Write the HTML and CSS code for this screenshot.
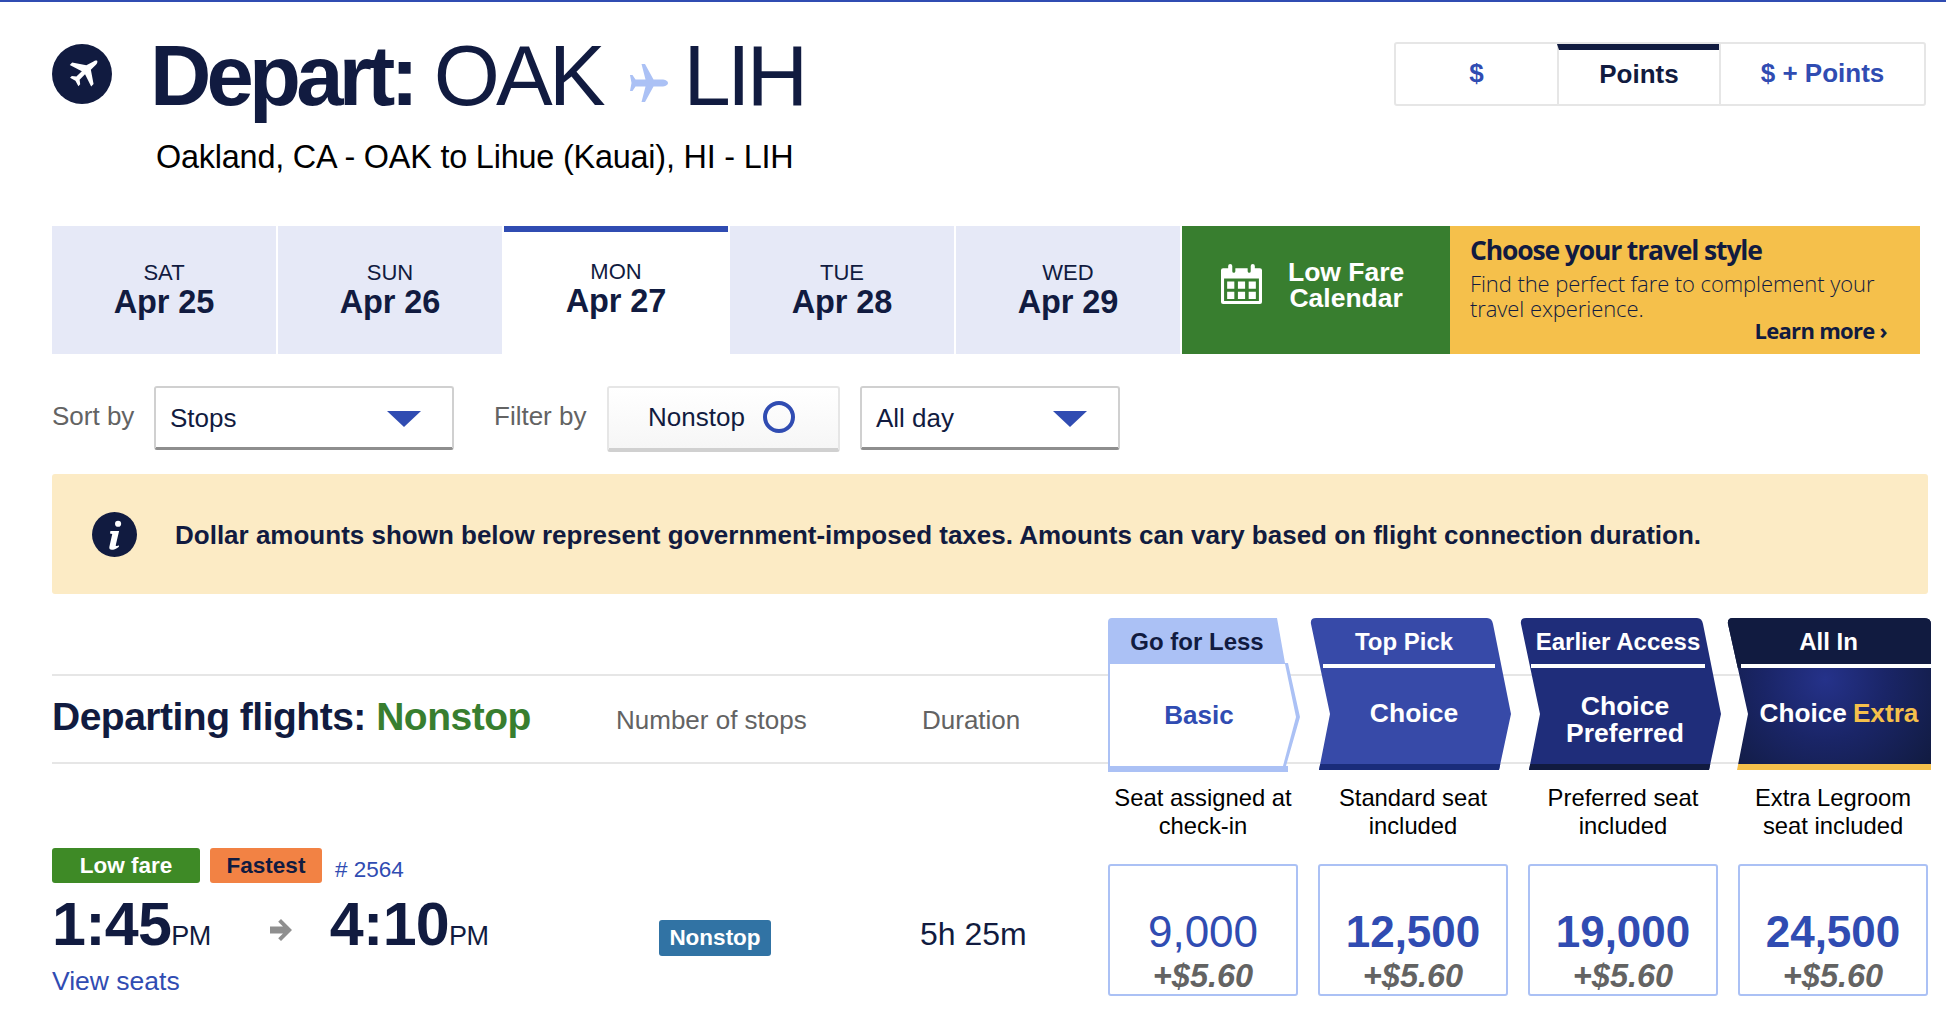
FILE: index.html
```html
<!DOCTYPE html>
<html lang="en">
<head>
<meta charset="utf-8">
<title>Depart: OAK to LIH</title>
<link rel="stylesheet" href="styles.css">
</head>
<body>
<main class="page">
  <header class="top">
    <div class="route">
      <svg class="depart-icon" viewBox="0 0 60 60"><circle cx="30" cy="30" r="30" fill="#111b40"/><path transform="translate(30 30) scale(.82) translate(-30 -30)" fill="#fff" d="M43.500 15.200c1.700-1.700 4.300-2.200 5-1.500s.2 3.300-1.500 5l-6.200 6.200 3.300 17.300-2.900 2.900-7.500-14.700-6.600 6.600.7 5.600-2.200 2.200-3.600-6.600-6.600-3.600 2.200-2.200 5.600.7 6.600-6.600-14.700-7.500 2.900-2.900 17.300 3.300z"/></svg>
      <div class="route-text">
        <h1 class="route-title"><b>Depart:</b> OAK <svg class="route-plane" viewBox="0 0 38 38"><path fill="#abc1f5" d="M38 19c0-2-3-3.500-6-3.500h-8.500L15 0h-3.500l4 15.500H5.500L2.500 11H0l1.500 8L0 27h2.500l3-4.500h10L11.500 38H15l8.500-15.500H32c3 0 6-1.500 6-3.500z"/></svg> LIH</h1>
        <p class="route-sub">Oakland, CA - OAK to Lihue (Kauai), HI - LIH</p>
      </div>
    </div>
    <div class="toggle">
      <div class="toggle-item">$</div>
      <div class="toggle-item toggle-active">Points</div>
      <div class="toggle-item">$ + Points</div>
    </div>
  </header>

  <section class="dates">
    <div class="date"><span class="date-day">SAT</span><span class="date-val">Apr 25</span></div>
    <div class="date"><span class="date-day">SUN</span><span class="date-val">Apr 26</span></div>
    <div class="date date-active"><span class="date-day">MON</span><span class="date-val">Apr 27</span></div>
    <div class="date"><span class="date-day">TUE</span><span class="date-val">Apr 28</span></div>
    <div class="date"><span class="date-day">WED</span><span class="date-val">Apr 29</span></div>
    <div class="calendar">
      <svg class="calendar-icon" viewBox="0 0 40 40"><path fill="#fff" d="M2 5h5V3a2 2 0 0 1 4 0v5a1.500 1.500 0 0 0 3 0V5h12v3a1.500 1.500 0 0 0 3 0V3a2 2 0 0 1 4 0v2h5a2 2 0 0 1 2 2v31a2 2 0 0 1-2 2H2a2 2 0 0 1-2-2V7a2 2 0 0 1 2-2zm1 10v22h34V15z"/><path fill="#fff" d="M6 18h7v7H6zm10.500 0h7v7h-7zM27 18h7v7h-7zM6 28h7v7H6zm10.500 0h7v7h-7zM27 28h7v7h-7z"/></svg>
      <div class="calendar-text"><span class="calendar-line">Low Fare</span><span class="calendar-line">Calendar</span></div>
    </div>
    <div class="promo">
      <div class="promo-title">Choose your travel style</div>
      <div class="promo-body">Find the perfect fare to complement your</div>
      <div class="promo-body">travel experience.</div>
      <div class="promo-link">Learn more ›</div>
    </div>
  </section>

  <section class="controls">
    <span class="control-label">Sort by</span>
    <div class="select select-sort"><span>Stops</span><i class="caret"></i></div>
    <span class="control-label control-label-filter">Filter by</span>
    <div class="chip"><span>Nonstop</span><i class="ring"></i></div>
    <div class="select select-time"><span>All day</span><i class="caret"></i></div>
  </section>

  <section class="notice">
    <svg class="notice-icon" viewBox="0 0 44 44"><circle cx="22" cy="22" r="22" fill="#111b40"/><circle cx="25.500" cy="11.500" r="3" fill="#fff"/><path fill="#fff" d="M18 18.500h8.500l-3.300 14c-.2 1 .6 1.200 2.800 0l.4 1.500c-3 2.200-5.400 3-7 3-2 0-2.800-1.200-2.400-3l2.800-12.500-2.200-.4z"/></svg>
    <p class="notice-text">Dollar amounts shown below represent government-imposed taxes. Amounts can vary based on flight connection duration.</p>
  </section>

  <section class="fares-head">
    <div class="heads">
      <h2 class="heads-title">Departing flights: <em>Nonstop</em></h2>
      <span class="heads-col heads-stops">Number of stops</span>
      <span class="heads-col heads-duration">Duration</span>
    </div>
    <div class="tile tile-basic">
      <div class="tile-tag">Go for Less</div>
      <div class="tile-inner">Basic</div>
    </div>
    <div class="tile tile-choice">
      <div class="tile-tag">Top Pick</div>
      <div class="tile-name">Choice</div>
    </div>
    <div class="tile tile-preferred">
      <div class="tile-tag">Earlier Access</div>
      <div class="tile-name">Choice<br>Preferred</div>
    </div>
    <div class="tile tile-extra">
      <div class="tile-tag">All In</div>
      <div class="tile-name">Choice <strong>Extra</strong></div>
    </div>
  </section>

  <section class="flight">
    <div class="captions">
      <div class="caption">Seat assigned at<br>check-in</div>
      <div class="caption">Standard seat<br>included</div>
      <div class="caption">Preferred seat<br>included</div>
      <div class="caption">Extra Legroom<br>seat included</div>
    </div>
    <div class="flight-info">
      <div class="tags">
        <span class="tag tag-low">Low fare</span>
        <span class="tag tag-fast">Fastest</span>
        <span class="flight-no"># 2564</span>
      </div>
      <div class="times">
        <span class="time">1:45<small>PM</small></span>
        <svg class="time-arrow" viewBox="0 0 22 22"><path fill="#8f8f8f" d="M11 0l11 11-11 11-2.800-2.800L13 14.500H0v-7h13L8.200 2.800z"/></svg>
        <span class="time">4:10<small>PM</small></span>
      </div>
      <a class="seats">View seats</a>
    </div>
    <div class="stops"><span class="stops-badge">Nonstop</span></div>
    <div class="duration">5h 25m</div>
    <div class="prices">
      <div class="price"><span class="points points-light">9,000</span><span class="tax">+$5.60</span></div>
      <div class="price"><span class="points">12,500</span><span class="tax">+$5.60</span></div>
      <div class="price"><span class="points">19,000</span><span class="tax">+$5.60</span></div>
      <div class="price"><span class="points">24,500</span><span class="tax">+$5.60</span></div>
    </div>
  </section>
</main>
</body>
</html>
```

FILE: styles.css
```css
* { box-sizing: border-box; }
html, body { margin: 0; height: 100%; overflow: hidden; background: #fff; }
body {
  border-top: 2px solid #304cb2;
  font-family: "Liberation Sans", Arial, sans-serif;
  color: #111b40;
}
.page { padding-left: 52px; width: 1946px; }

/* header */
.top { display: flex; height: 224px; }
.route { display: flex; width: 1342px; padding-top: 42px; }
.depart-icon { width: 60px; height: 60px; flex: none; }
.route-text { margin-left: 38px; }
.route-title {
  margin: 0;
  font-size: 85px;
  line-height: 62px;
  font-weight: 400;
  letter-spacing: -3.800px;
  white-space: nowrap;
  padding-top: 1px;
}
.route-title b { font-weight: 700; letter-spacing: -4.800px; }
.route-plane { width: 38px; height: 38px; margin: 0 -4px 0 8px; vertical-align: 3px; }
.route-sub { margin: 32px 0 0 6px; font-size: 32.400px; line-height: 36px; color: #000; letter-spacing: -.2px; }

.toggle {
  display: flex;
  width: 532px;
  height: 64px;
  margin-top: 40px;
  border: 2px solid #e6e6e6;
  border-radius: 3px;
}
.toggle-item {
  flex: 1;
  display: flex;
  align-items: center;
  justify-content: center;
  font-size: 26px;
  font-weight: 700;
  color: #304cb2;
  border-left: 2px solid #e6e6e6;
  padding-bottom: 1px;
}
.toggle-item:first-child { flex: none; width: 161px; border-left: 0; }
.toggle-item:last-child { flex: none; width: 207px; padding-right: 2px; }
.toggle-active { color: #111b40; flex: none; width: 162px; border-top: 6px solid #111b40; padding-bottom: 5px; }

/* dates */
.dates { display: flex; height: 128px; }
.date {
  width: 224px;
  margin-right: 2px;
  background: #e6e9f7;
  display: flex;
  flex-direction: column;
  align-items: center;
  padding-top: 34px;
}
.date-day { font-size: 22px; line-height: 25px; }
.date-val { font-size: 32.500px; line-height: 35px; font-weight: 700; letter-spacing: -.1px; }
.date-active { background: #fff; border-top: 6px solid #304cb2; padding-top: 27px; }
.calendar {
  width: 268px;
  background: #387e2f;
  color: #fff;
  display: flex;
  align-items: center;
  padding: 0 0 8px 39px;
}
.calendar-icon { width: 41px; height: 41px; flex: none; margin-top: -5px; }
.calendar-text { margin-left: 26px; font-size: 26.500px; font-weight: 700; text-align: center; margin-top: -3px; }
.calendar-line { display: block; height: 26px; line-height: 26px; }
.promo {
  width: 470px;
  background: #f5c04b;
  padding: 6px 32px 0 20px;
  font-family: "Open Sans", sans-serif;
}
.promo-title { font-size: 26.500px; line-height: 36px; font-weight: 700; letter-spacing: -1.150px; margin-bottom: 3px; }
.promo-body { width: fit-content; font-size: 22px; line-height: 25px; letter-spacing: -.08px; font-weight: 300; }
.promo-link { text-align: right; font-size: 22px; line-height: 26px; font-weight: 700; letter-spacing: -.7px; margin: -4px 1px 0 0; }

/* controls */
.controls { display: flex; align-items: flex-start; margin-top: 32px; height: 66px; }
.control-label { font-size: 26px; line-height: 60px; color: #636363; width: 102px; }
.control-label-filter { margin-left: 40px; width: 113px; }
.select {
  height: 64px;
  display: flex;
  align-items: center;
  justify-content: space-between;
  padding: 2px 31px 0 14px;
  border: 2px solid #d0d0d0;
  border-bottom: 3px solid #8e8e8e;
  border-radius: 3px;
  font-size: 26px;
}
.select-sort { width: 300px; }
.select-time { width: 260px; margin-left: 20px; }
.caret {
  width: 0;
  height: 0;
  border-left: 17px solid transparent;
  border-right: 17px solid transparent;
  border-top: 16px solid #304cb2;
}
.chip {
  width: 233px;
  height: 66px;
  display: flex;
  align-items: center;
  padding: 0 0 2px 39px;
  gap: 18px;
  border: 2px solid #e6e6e6;
  border-bottom: 4px solid #d0d0d0;
  border-radius: 3px;
  background: linear-gradient(#fff, #f6f6f6);
  font-size: 26px;
}
.ring { width: 32px; height: 32px; border: 4px solid #304cb2; border-radius: 50%; }

/* notice */
.notice {
  display: flex;
  align-items: center;
  width: 1876px;
  height: 120px;
  margin-top: 22px;
  padding-left: 40px;
  background: #fcebc5;
  border-radius: 3px;
}
.notice-icon { width: 45px; height: 45px; flex: none; }
.notice-text { margin: 2px 0 0 38px; font-size: 26px; font-weight: 700; white-space: nowrap; }

/* fare header */
.fares-head {
  display: grid;
  grid-template-columns: 1056px 210px 210px 210px 192px;
  grid-template-rows: 154px;
  margin-top: 24px;
  width: 1878px;
  background:
    linear-gradient(#e6e6e6, #e6e6e6) 0 56px / 1700px 2px no-repeat,
    linear-gradient(#e6e6e6, #e6e6e6) 0 144px / 1700px 2px no-repeat;
}
.heads { display: flex; align-items: flex-start; padding-top: 77px; }
.heads-title { margin: 0; font-size: 39px; line-height: 44px; font-weight: 700; letter-spacing: -.5px; white-space: nowrap; width: 564px; }
.heads-title em { font-style: normal; color: #387e2f; }
.heads-col { font-size: 26px; line-height: 30px; color: #636363; margin-top: 10px; }
.heads-stops { width: 306px; }

.tile { color: #fff; text-align: center; }
.tile-tag { height: 46px; font-size: 24px; font-weight: 700; line-height: 47px; }
.tile-name {
  font-size: 26.500px;
  line-height: 27.500px;
  font-weight: 700;
  flex: 1;
  display: flex;
  align-items: center;
  justify-content: center;
}
.tile-choice, .tile-preferred, .tile-extra {
  width: 212px;
  height: 152px;
  margin-left: -9px;
  display: flex;
  flex-direction: column;
  border-bottom: 6px solid #1a2c7a;
  clip-path: path("M2 6Q1 0 7 0H178Q183 0 184 6L202 96L190 152H10L21 96Z");
  background: #374aa8;
}
.tile-choice .tile-tag, .tile-preferred .tile-tag, .tile-extra .tile-tag {
  height: 50px;
  margin: 0 26px 0 14px;
  border-bottom: 4px solid #fff;
}
.tile-choice .tile-tag { padding-right: 10px; }
.tile-choice .tile-name { padding: 0 20px 4px 18px; }
.tile-preferred .tile-name { padding: 8px 18px 0 18px; }
.tile-preferred { background: #1f2d7a; border-bottom-color: #111b40; }
.tile-preferred .tile-tag { margin: 0 26px 0 12px; white-space: nowrap; }
.tile-extra {
  width: 205px;
  margin-left: -11px;
  background:
    linear-gradient(#111b40 50px, transparent 50px),
    radial-gradient(circle at 48% 42%, #25328a 0, #1a2567 45%, #111b40 100%);
  border-bottom-color: #f5c04b;
  clip-path: path("M1 6Q0 0 6 0H197Q204 0 204 6V152H10L21 96Z");
}
.tile-extra .tile-tag { margin: 0 0 0 14px; padding-right: 16px; }
.tile-extra .tile-name { padding: 0 1px 4px 20px; white-space: nowrap; font-size: 26.200px; }
.tile-extra strong { color: #f5c04b; margin-left: 6px; }

.tile-basic {
  width: 192px;
  height: 154px;
  background: #abc1f5;
  color: #111b40;
  clip-path: path("M0 4Q0 0 4 0H169L177 45H180L192 99L178 148H180V154H0Z");
}
.tile-basic .tile-tag { padding-right: 14px; }
.tile-inner {
  width: 188px;
  height: 102px;
  margin-left: 2px;
  background: #fff;
  color: #304cb2;
  font-size: 26px;
  font-weight: 700;
  line-height: 102px;
  padding-right: 10px;
  clip-path: path("M0 0H175L186 53L173 102H0Z");
}

/* flight row */
.flight {
  display: grid;
  grid-template-columns: 607px 261px 188px 800px;
  grid-template-rows: 74px auto;
}
.captions {
  grid-column: 4;
  grid-row: 1;
  display: grid;
  grid-template-columns: repeat(4, 190px);
  column-gap: 20px;
  padding-top: 12px;
}
.caption { font-size: 23.800px; line-height: 27.500px; color: #000; text-align: center; margin: 0 -12px; }
.flight-info { grid-column: 1; grid-row: 1 / 3; padding-top: 76px; }
.tags { display: flex; align-items: flex-start; height: 35px; }
.tag {
  height: 35px;
  border-radius: 3px;
  font-size: 22.500px;
  font-weight: 700;
  line-height: 35px;
  text-align: center;
}
.tag-low { width: 148px; background: #3e8a26; color: #fff; }
.tag-fast { width: 112px; margin-left: 10px; background: #f28244; color: #111b40; }
.flight-no { margin: 8px 0 0 13px; font-size: 22.500px; line-height: 28px; color: #304cb2; }
.times { display: flex; align-items: center; margin-top: 21px; height: 52px; }
.time { font-size: 61px; line-height: 52px; font-weight: 700; letter-spacing: -.7px; white-space: nowrap; }
.time small { font-size: 27px; font-weight: 400; letter-spacing: -.5px; }
.time-arrow { width: 22px; height: 22px; margin: 0 38px 0 59px; }
.seats { display: block; margin-top: 10px; font-size: 26.500px; line-height: 30px; color: #304cb2; }
.stops { grid-column: 2; grid-row: 1 / 3; padding-top: 148px; }
.stops-badge {
  display: block;
  width: 112px;
  height: 36px;
  border-radius: 3px;
  background: #3173a4;
  color: #fff;
  font-size: 22.500px;
  font-weight: 700;
  line-height: 36px;
  text-align: center;
}
.duration { grid-column: 3; grid-row: 1 / 3; padding-top: 143px; font-size: 32px; line-height: 38px; white-space: nowrap; }
.prices {
  grid-column: 4;
  grid-row: 2;
  display: grid;
  grid-template-columns: repeat(4, 190px);
  column-gap: 20px;
  margin-top: 18px;
}
.price {
  height: 132px;
  border: 2px solid #abc1f5;
  border-radius: 3px;
  display: flex;
  flex-direction: column;
  align-items: center;
  padding-top: 40px;
}
.points { font-size: 44px; line-height: 52px; font-weight: 700; color: #304cb2; }
.points-light { font-weight: 400; }
.tax { font-size: 32.500px; line-height: 36px; font-weight: 700; font-style: italic; color: #636363; }
```
